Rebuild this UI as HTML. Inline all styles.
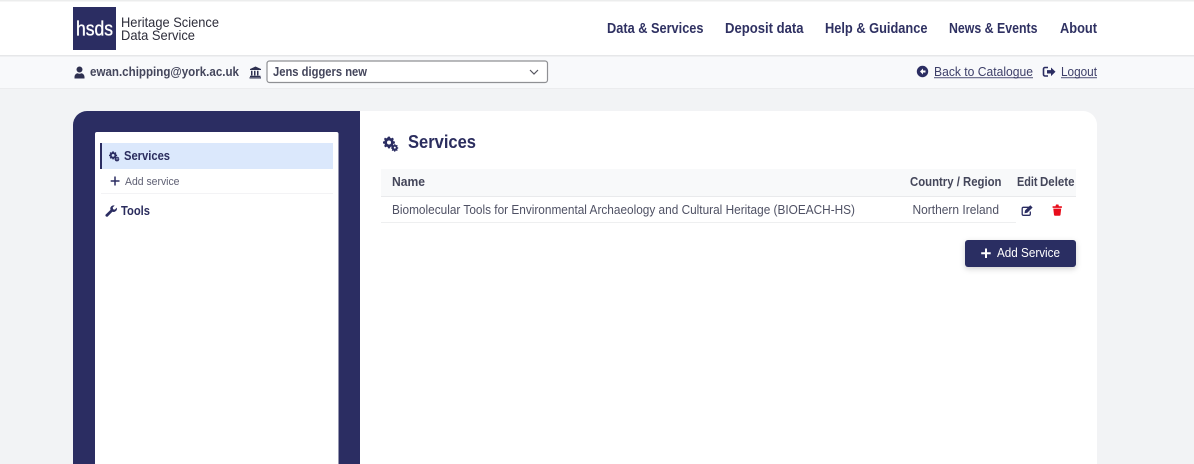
<!DOCTYPE html>
<html lang="en">
<head>
<meta charset="utf-8">
<title>Services - Heritage Science Data Service</title>
<style>
html,body{margin:0;padding:0;width:1194px;height:464px;overflow:hidden;background:#f2f3f5}
svg{display:block}
text{font-family:"Liberation Sans","DejaVu Sans",sans-serif}
.nav{font-size:14.5px;font-weight:700;fill:#2f3162}
.t{font-size:13px;fill:#4f5164}
.b{font-weight:700;fill:#2b2d5e}
</style>
</head>
<body>
<svg width="1194" height="464" viewBox="0 0 1194 464" xmlns="http://www.w3.org/2000/svg">
<defs>
<filter id="s" x="-20%" y="-30%" width="140%" height="170%"><feDropShadow dx="0" dy="2" stdDeviation="3" flood-color="#000" flood-opacity=".18"/></filter>
<g id="gears" fill="currentColor">
<path d="M5 0.600h2l.3 1.400 1 .4 1.200-.8 1.400 1.400-.8 1.200.4 1 1.400.3v2l-1.400.3-.4 1 .8 1.200-1.400 1.400-1.200-.8-1 .4-.3 1.400H5l-.3-1.400-1-.4-1.200.8-1.400-1.400.8-1.200-.4-1L0 7.500v-2l1.400-.3.4-1-.8-1.200L2 1.600l1.200.8 1-.4zM6 4.500a2 2 0 1 0 0 4 2 2 0 0 0 0-4z" fill-rule="evenodd"/>
<path d="M11.200 8.200h1.200l.2.8.6.3.8-.4.7.9-.5.7.2.7.8.2v1.200l-.8.2-.2.7.5.7-.8.8-.7-.5-.7.3-.2.8h-1.200l-.2-.8-.7-.3-.7.5-.8-.8.5-.7-.3-.7-.8-.2v-1.200l.8-.2.3-.7-.5-.7.8-.8.7.4.7-.3zM11.800 10.600a1 1 0 1 0 0 2 1 1 0 0 0 0-2z" fill-rule="evenodd"/>
</g>
</defs>

<!-- header -->
<rect x="0" y="1" width="1194" height="54" fill="#fff"/>
<rect x="0" y="0" width="1194" height="1.500" fill="#eceded"/>
<rect x="0" y="55" width="1194" height="1.500" fill="#e6e7e9"/>
<rect x="73" y="7" width="43" height="43" fill="#2b2d62"/>
<text x="76" y="35.500" font-size="20" fill="#fff" stroke="#fff" stroke-width=".35" textLength="37" lengthAdjust="spacingAndGlyphs">hsds</text>
<text x="121" y="27" font-size="14" fill="#2d2d3a" textLength="98" lengthAdjust="spacingAndGlyphs">Heritage Science</text>
<text x="121" y="40" font-size="14" fill="#2d2d3a" textLength="74" lengthAdjust="spacingAndGlyphs">Data Service</text>

<text class="nav" x="607" y="33" textLength="96.500" lengthAdjust="spacingAndGlyphs">Data &amp; Services</text>
<text class="nav" x="725" y="33" textLength="78.500" lengthAdjust="spacingAndGlyphs">Deposit data</text>
<text class="nav" x="825" y="33" textLength="102.500" lengthAdjust="spacingAndGlyphs">Help &amp; Guidance</text>
<text class="nav" x="949" y="33" textLength="88.500" lengthAdjust="spacingAndGlyphs">News &amp; Events</text>
<text class="nav" x="1060" y="33" textLength="37" lengthAdjust="spacingAndGlyphs">About</text>

<!-- sub bar -->
<rect x="0" y="56.500" width="1194" height="32" fill="#f8f9fb"/>
<rect x="0" y="88" width="1194" height="1" fill="#ebecee"/>
<path d="M79.500 66.500a3 3 0 1 1 0 6 3 3 0 0 1 0-6zM74.500 78.500v-1.500c0-2.300 1.700-3.600 3-3.800.7.300 1.300.5 2 .5s1.300-.2 2-.5c1.300.2 3 1.500 3 3.800v1.500z" fill="#2e3050"/>
<text x="90" y="76" font-size="13" font-weight="700" fill="#44465c" textLength="149" lengthAdjust="spacingAndGlyphs">ewan.chipping@york.ac.uk</text>
<path d="M255.500 66.500l5.500 2.500v1h-11v-1zM251 70.800h1.500v4.700H251zM254 70.800h1.500v4.700H254zM257 70.800h1.500v4.700H257zM250 75.800h10.500v1.200H250zM249.500 77.300h11.500v1.200h-11.500z" fill="#2e3050"/>
<rect x="267" y="61" width="280.500" height="21.500" rx="2.500" fill="#fff" stroke="#8f9094" stroke-width="1.200"/>
<text x="273" y="76" font-size="13" font-weight="700" fill="#44465c" textLength="94" lengthAdjust="spacingAndGlyphs">Jens diggers new</text>
<path d="M530 70l4 4 4-4" fill="none" stroke="#55565f" stroke-width="1.200"/>

<circle cx="922.500" cy="71.500" r="5.700" fill="#2b2d62"/>
<path d="M923 68.500l-3 3 3 3v-2h2.500v-2H923z" fill="#fff"/>
<text x="934" y="76" font-size="13" fill="#3c3e68" textLength="99" lengthAdjust="spacingAndGlyphs">Back to Catalogue</text>
<rect x="934" y="77.300" width="99" height="0.900" fill="#3c3e68"/>
<path d="M1048 67.500h-3a1.500 1.500 0 0 0-1.500 1.500v5.500a1.500 1.500 0 0 0 1.500 1.500h3" fill="none" stroke="#2b2d62" stroke-width="1.600"/>
<path d="M1051 67.500l4.500 4.300-4.500 4.300V73.500h-4v-3.400h4z" fill="#2b2d62"/>
<text x="1061" y="76" font-size="13" fill="#3c3e68" textLength="36" lengthAdjust="spacingAndGlyphs">Logout</text>
<rect x="1061" y="77.300" width="36" height="0.900" fill="#3c3e68"/>

<!-- panel -->
<path d="M87 111H1083a14 14 0 0 1 14 14V464H73V125a14 14 0 0 1 14-14z" fill="#fff"/>
<path d="M360 111H87a14 14 0 0 0-14 14v339h287z" fill="#2b2d62"/>
<path d="M95 134a2 2 0 0 1 2-2h239.500a2 2 0 0 1 2 2v330H95z" fill="#fff"/>

<!-- sidebar -->
<rect x="100" y="143" width="233" height="26" fill="#dbe8fc"/>
<rect x="100" y="143" width="2" height="26" fill="#2b2d62"/>
<use href="#gears" transform="translate(109 151) scale(.68)" style="color:#2b2d62"/>
<text class="b" x="124" y="160" font-size="12.500" textLength="46" lengthAdjust="spacingAndGlyphs">Services</text>
<path d="M115 176.500v9M110.700 181h8.800" stroke="#2b2d62" stroke-width="1.500" fill="none"/>
<text x="125" y="185" font-size="11" fill="#5d5e72" textLength="54.500" lengthAdjust="spacingAndGlyphs">Add service</text>
<rect x="101" y="193" width="232" height="1" fill="#f3f3f5"/>
<path d="M105.500 214.700l5-4.800a3.400 3.400 0 0 1 4.200-4.400l-2 2 .4 1.700 1.700.4 2-2a3.400 3.400 0 0 1-4.400 4.200l-4.800 4.800a1.500 1.500 0 0 1-2.100-1.900z" fill="#2b2d62"/>
<text class="b" x="121" y="215" font-size="12.500" textLength="29" lengthAdjust="spacingAndGlyphs">Tools</text>

<!-- main -->
<use href="#gears" transform="translate(383 136)" style="color:#2b2d62"/>
<text x="408" y="148" font-size="18" font-weight="700" fill="#2b2d5e" textLength="68" lengthAdjust="spacingAndGlyphs">Services</text>

<rect x="381" y="169" width="695" height="27" fill="#f8f9fa"/>
<rect x="381" y="196" width="695" height="1" fill="#e9eaec"/>
<rect x="381" y="222" width="635" height="1" fill="#eeeff0"/>
<text x="392" y="186" font-size="12.500" font-weight="700" fill="#44465a" textLength="33" lengthAdjust="spacingAndGlyphs">Name</text>
<text x="910" y="186" font-size="12.500" font-weight="700" fill="#44465a" textLength="91.500" lengthAdjust="spacingAndGlyphs">Country / Region</text>
<text x="1017" y="186" font-size="12.500" font-weight="700" fill="#44465a" textLength="20.500" lengthAdjust="spacingAndGlyphs">Edit</text>
<text x="1040" y="186" font-size="12.500" font-weight="700" fill="#44465a" textLength="34.500" lengthAdjust="spacingAndGlyphs">Delete</text>

<text class="t" x="392" y="214" textLength="463" lengthAdjust="spacingAndGlyphs">Biomolecular Tools for Environmental Archaeology and Cultural Heritage (BIOEACH-HS)</text>
<text class="t" x="912.500" y="214" textLength="86.500" lengthAdjust="spacingAndGlyphs">Northern Ireland</text>

<path d="M1029.500 207.300h-6a1.300 1.300 0 0 0-1.300 1.300v5.400a1.300 1.300 0 0 0 1.300 1.300h5.500a1.300 1.300 0 0 0 1.300-1.300v-2.500" fill="none" stroke="#2b2d62" stroke-width="1.300"/>
<path d="M1025 210.500l5.300-5.300 2.300 2.300-5.300 5.300-2.800.5z" fill="#2b2d62"/>
<path d="M1052.600 206.300h2.900l.5-1.800h2.400l.5 1.800h3v1.600h-9.300zM1053.300 208.600h7.900l-.7 6.300a1 1 0 0 1-1 .9h-4.500a1 1 0 0 1-1-.9z" fill="#e80d1b"/>

<rect x="965" y="240" width="111" height="27" rx="3" fill="#2b2d62" filter="url(#s)"/>
<path d="M986 248.500v9.500M981.200 253.200h9.500" stroke="#fff" stroke-width="2" fill="none"/>
<text x="997" y="257" font-size="13" fill="#fff" textLength="63" lengthAdjust="spacingAndGlyphs">Add Service</text>
</svg>
</body>
</html>
